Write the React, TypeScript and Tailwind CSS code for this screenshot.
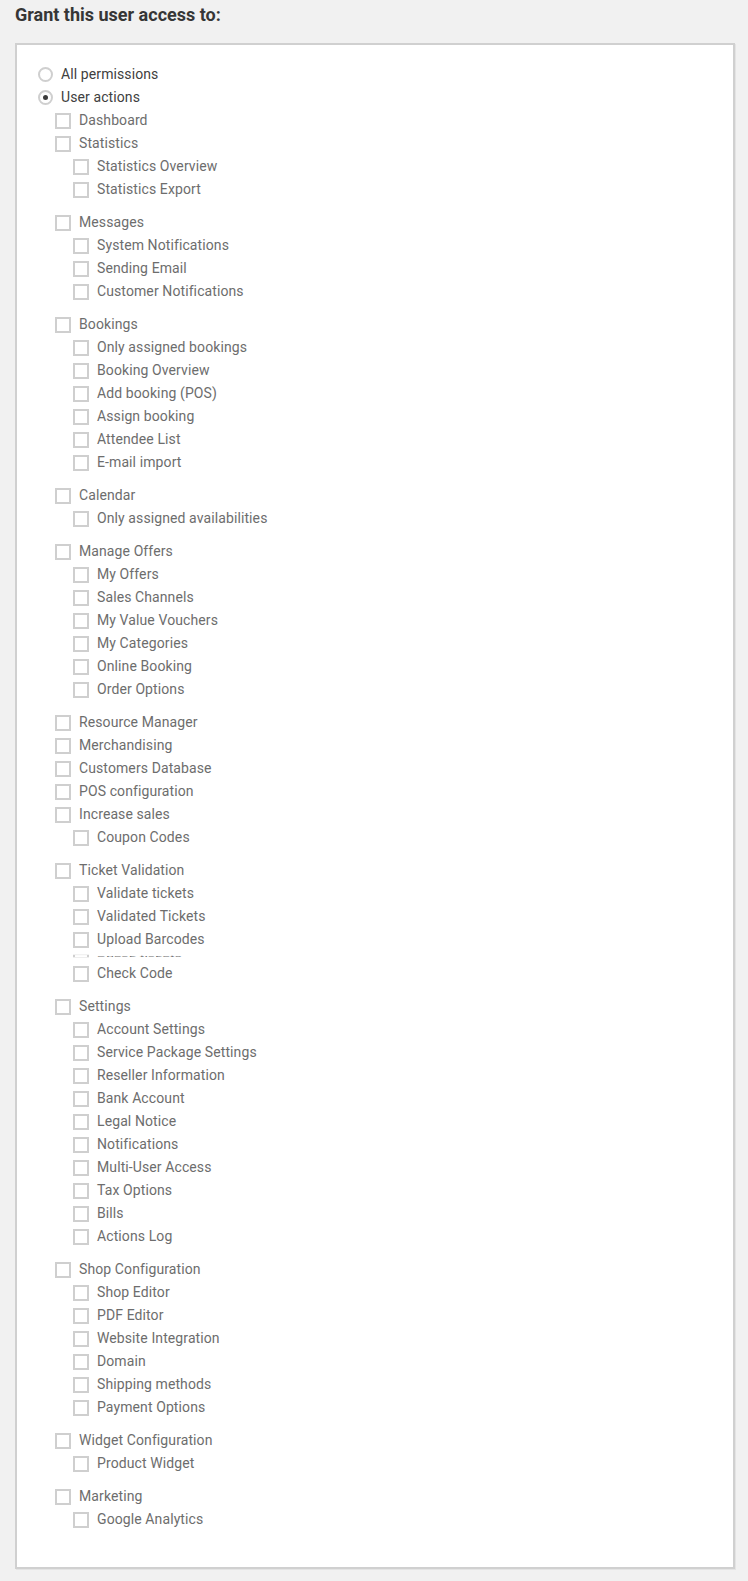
import React, { useState } from "react";

type Perm = { label: string; children?: string[] };

const PERMS: Perm[] = [
  { label: "Dashboard" },
  { label: "Statistics", children: ["Statistics Overview", "Statistics Export"] },
  { label: "Messages", children: ["System Notifications", "Sending Email", "Customer Notifications"] },
  {
    label: "Bookings",
    children: [
      "Only assigned bookings",
      "Booking Overview",
      "Add booking (POS)",
      "Assign booking",
      "Attendee List",
      "E-mail import",
    ],
  },
  { label: "Calendar", children: ["Only assigned availabilities"] },
  {
    label: "Manage Offers",
    children: ["My Offers", "Sales Channels", "My Value Vouchers", "My Categories", "Online Booking", "Order Options"],
  },
  { label: "Resource Manager" },
  { label: "Merchandising" },
  { label: "Customers Database" },
  { label: "POS configuration" },
  { label: "Increase sales", children: ["Coupon Codes"] },
  {
    label: "Ticket Validation",
    children: ["Validate tickets", "Validated Tickets", "Upload Barcodes", "__collapsing__", "Check Code"],
  },
  {
    label: "Settings",
    children: [
      "Account Settings",
      "Service Package Settings",
      "Reseller Information",
      "Bank Account",
      "Legal Notice",
      "Notifications",
      "Multi-User Access",
      "Tax Options",
      "Bills",
      "Actions Log",
    ],
  },
  {
    label: "Shop Configuration",
    children: ["Shop Editor", "PDF Editor", "Website Integration", "Domain", "Shipping methods", "Payment Options"],
  },
  { label: "Widget Configuration", children: ["Product Widget"] },
  { label: "Marketing", children: ["Google Analytics"] },
];

const Box = () => <span className="block w-4 h-4 border-2 border-[#cfcfcf] bg-white shrink-0" />;

const CheckRow = ({ label }: { label: string }) => (
  <div className="flex items-center h-[23px] gap-2">
    <Box />
    <span className="text-[14px] tracking-[0.1px] text-[#6d6d6d]">{label}</span>
  </div>
);

const Radio = ({ checked, label, onClick }: { checked: boolean; label: string; onClick: () => void }) => (
  <div className="flex items-center h-[23px] gap-2 cursor-pointer" onClick={onClick}>
    <span className="w-[15px] h-[15px] rounded-full border-2 border-[#cfcfcf] bg-white flex items-center justify-center">
      {checked && <span className="w-[5px] h-[5px] rounded-full bg-[#3c3c3c]" />}
    </span>
    <span className="text-[14px] tracking-[0.1px] text-[#404040]">{label}</span>
  </div>
);

export default function App() {
  const [mode, setMode] = useState<"all" | "user">("user");

  return (
    <div className="min-h-[1581px] bg-[#f1f1f1] pb-3" style={{ fontFamily: "Roboto, 'Liberation Sans', sans-serif" }}>
      <h2 className="pl-[15px] pt-[4px] text-[18px] leading-[21px] font-bold text-[#363636]">Grant this user access to:</h2>

      <div className="ml-[15px] mt-[18px] w-[720px] bg-white border-2 border-[#d0d0d0] shadow-[1px_1px_0_#e4e4e4] pt-[18px] pb-[26px] pl-[21px]">
        <Radio checked={mode === "all"} label="All permissions" onClick={() => setMode("all")} />
        <Radio checked={mode === "user"} label="User actions" onClick={() => setMode("user")} />

        <div className="pl-[17px]">
          {PERMS.map((p) => (
            <div key={p.label} className={p.children ? "mb-[10px]" : ""}>
              <CheckRow label={p.label} />
              {p.children && (
                <div className="pl-[18px]">
                  {p.children.map((c) =>
                    c === "__collapsing__" ? (
                      <div key={c} className="h-[11px] pt-[3px] overflow-hidden">
                        <div className="origin-top scale-y-[0.18]">
                          <CheckRow label="Check tickets" />
                        </div>
                      </div>
                    ) : (
                      <CheckRow key={c} label={c} />
                    )
                  )}
                </div>
              )}
            </div>
          ))}
        </div>
      </div>
    </div>
  );
}
